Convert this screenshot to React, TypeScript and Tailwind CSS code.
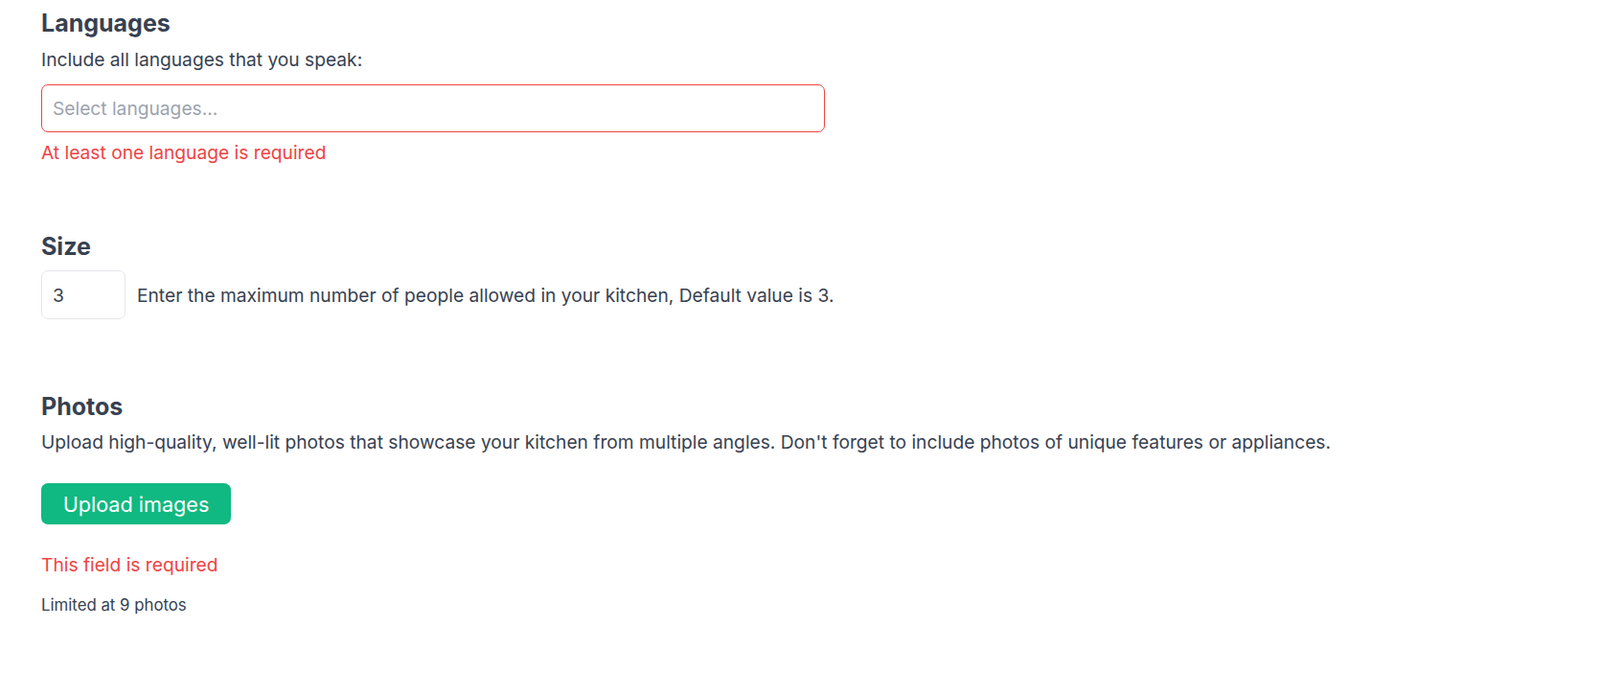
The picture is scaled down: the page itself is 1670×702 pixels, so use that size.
import React from "react";

const App: React.FC = () => {
  return (
    <div className="min-h-screen bg-white text-[#374151] font-['Inter',sans-serif] text-[19.2px] leading-[28px] pl-[43px] pt-[8px]">
      {/* Languages */}
      <section>
        <h2 className="text-[25px] leading-[32px] font-bold">Languages</h2>
        <p className="mt-[8px]">Include all languages that you speak:</p>
        <input
          type="text"
          placeholder="Select languages..."
          className="mt-[12px] block w-[818px] h-[50px] rounded-[7px] border border-[#ef4444] px-[11px] placeholder:text-[#9ca3af] outline-none"
        />
        <p className="mt-[7px] text-[#ef4444]">At least one language is required</p>
      </section>

      {/* Size */}
      <section className="mt-[68px]">
        <h2 className="text-[25px] leading-[32px] font-bold">Size</h2>
        <div className="mt-[9px] flex items-center gap-3">
          <input
            type="number"
            defaultValue={3}
            className="w-[88px] h-[51px] rounded-[7px] border border-[#e5e7eb] px-[11px] outline-none [appearance:textfield]"
          />
          <span>Enter the maximum number of people allowed in your kitchen, Default value is 3.</span>
        </div>
      </section>

      {/* Photos */}
      <section className="mt-[75px]">
        <h2 className="text-[25px] leading-[32px] font-bold">Photos</h2>
        <p className="mt-[7px]">
          Upload high-quality, well-lit photos that showcase your kitchen from multiple angles. Don't forget to include photos of unique features or appliances.
        </p>
        <button className="mt-[29px] block h-[43px] w-[198px] rounded-[7px] bg-[#10b981] text-[21.6px] text-white">
          Upload images
        </button>
        <p className="mt-[28px] text-[#ef4444]">This field is required</p>
        <p className="mt-[16px] text-[16.8px] leading-[24px]">Limited at 9 photos</p>
      </section>
    </div>
  );
};

export default App;
